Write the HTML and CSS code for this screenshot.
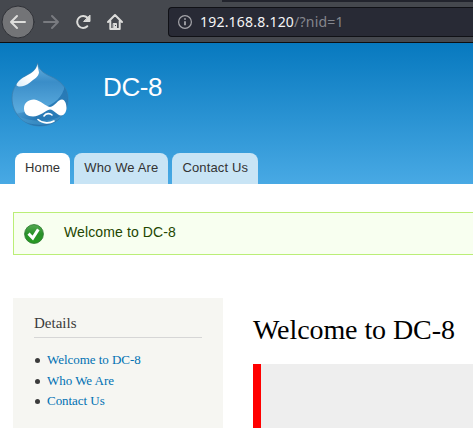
FILE: index.html
```html
<!DOCTYPE html>
<html lang="en">
<head>
<meta charset="utf-8">
<title>Welcome to DC-8</title>
<link rel="stylesheet" href="styles.css">
</head>
<body>
<div class="toolbar">
  <svg class="nav-icons" width="168" height="42" viewBox="0 0 168 42" fill="none" stroke-width="2" stroke-linecap="round" stroke-linejoin="round">
    <circle cx="18" cy="22" r="16" fill="#737477" stroke="#2f3137" stroke-width="1"/>
    <path d="M25 22H11M17 16l-6 6 6 6" stroke="#dededc"/>
    <path d="M44 22h14M52 16l6 6-6 6" stroke="#797b80"/>
    <path d="M87.3 26.3A6 6 0 1 1 87.5 17.8" stroke="#dcdcda"/>
    <path d="M90 15.5v6h-6z" fill="#dcdcda" stroke="#dcdcda" stroke-width="1"/>
    <path d="M108 22l7-7 7 7M110.3 21v8h9.4v-8" stroke="#dcdcda"/>
    <path d="M113.5 23.5h3v5h-3z" fill="#dcdcda" stroke="#dcdcda" stroke-width="1"/>
    <path d="M115 25h1v1h-1z" fill="#45484e"/>
  </svg>
  <div class="address">
    <svg width="16" height="16" viewBox="0 0 16 16" fill="none">
      <circle cx="8" cy="8" r="6.4" stroke="#a5a5aa" stroke-width="1.2"/>
      <path d="M8 7.3v4M8 4.3v1.5" stroke="#b5b5b9" stroke-width="1.6"/>
    </svg>
    <span class="url"><span class="host">192.168.8.120</span>/?nid=1</span>
  </div>
  <div class="tab-edge"></div>
</div>
<header class="header">
  <div class="branding">
    <svg class="logo" width="58" height="65" viewBox="0 0 58 65">
      <defs>
        <linearGradient id="drop" x1="0" y1="0" x2="0" y2="1">
          <stop offset="0" stop-color="#65b1df"/><stop offset=".3" stop-color="#3a8dc8"/><stop offset=".75" stop-color="#5aaadd"/><stop offset="1" stop-color="#3c92cd"/>
        </linearGradient>
        <linearGradient id="shine" x1="1" y1="0" x2="0" y2="1">
          <stop offset=".5" stop-color="#fff"/><stop offset="1" stop-color="#d9ecf8"/>
        </linearGradient>
        <linearGradient id="shade" x1="1" y1="0" x2="0" y2="0">
          <stop offset="0" stop-color="#1c6fac"/><stop offset=".6" stop-color="#1a6aa8"/><stop offset="1" stop-color="#1a6aa8" stop-opacity=".2"/>
        </linearGradient>
        <clipPath id="dropClip"><path d="M26.5 1C28 9 34 12 43 16C52 21 57 28 57 37C57 53 44 64 29 64C13 64 1 52 1 36C1 26 7 18 16 13C22 10 26 7 26.5 1Z"/></clipPath>
      </defs>
      <path d="M26.5 1C28 9 34 12 43 16C52 21 57 28 57 37C57 53 44 64 29 64C13 64 1 52 1 36C1 26 7 18 16 13C22 10 26 7 26.5 1Z" fill="url(#drop)" stroke="#3b7fae" stroke-width=".8"/>
      <g clip-path="url(#dropClip)">
        <path d="M54 23C52 35 43 43 31 46C22 49 12 50 3 52V65H58V23Z" fill="url(#shade)" opacity=".72"/>
        <path d="M3 52C14 66 43 67 54 51C43 61 18 61 3 52Z" fill="#4b9fd2" opacity=".5"/>
      </g>
      <path d="M26.5 2C25.5 8 21 11 16 13.5C10 16.5 6 20 5.5 23C6 25.5 14 25 19 20.5C23 17 27.5 15 28 10.500C27.500 7.500 26.500 5 26.500 2Z" fill="url(#shine)"/>
      <path d="M23 37.500C30 38.500 34 44 39 45C44 44 47 37.500 51 37.500C54 37.500 55.500 42 55.500 46C55.500 50 53 53.500 50 53.500C46 53.500 43 47.500 39 47.500C34 48.500 29 54.500 22 54.500C16 54.500 13 51.500 13 46.500C13 41 17 37.500 23 37.500Z" fill="#fff"/>
      <path d="M33 54C35 51 39 51 41 53M27 57.5C32 62 39 61.5 43 59" fill="none" stroke="#fff" stroke-width="1.6" stroke-linecap="round"/>
    </svg>
    <div class="site-name">DC-8</div>
  </div>
  <nav class="menu">
    <a class="tab active">Home</a>
    <a class="tab">Who We Are</a>
    <a class="tab">Contact Us</a>
  </nav>
</header>
<div class="message">
  <svg width="20" height="20" viewBox="0 0 20 20">
    <defs><linearGradient id="ok" x1="0" y1="0" x2="0" y2="1"><stop offset="0" stop-color="#55a952"/><stop offset=".5" stop-color="#289128"/><stop offset="1" stop-color="#289b22"/></linearGradient></defs>
    <circle cx="10" cy="10" r="9.4" fill="url(#ok)" stroke="#317e34" stroke-width=".9"/>
    <path d="M4.5 9.6l4.3 4.4 5.5-8.6" fill="none" stroke="#fff" stroke-width="3"/>
  </svg>
  <span>Welcome to DC-8</span>
</div>
<div class="columns">
  <aside class="sidebar">
    <h2>Details</h2>
    <ul>
      <li><a>Welcome to DC-8</a></li>
      <li><a>Who We Are</a></li>
      <li><a>Contact Us</a></li>
    </ul>
  </aside>
  <main class="content">
    <h1>Welcome to DC-8</h1>
    <div class="quote"></div>
  </main>
</div>
</body>
</html>
```
FILE: styles.css
```css
* { box-sizing: border-box; }
body {
  margin: 0;
  width: 473px;
  height: 428px;
  overflow: hidden;
  background: #fff;
  font-family: "Liberation Serif", serif;
}
svg { display: block; flex: none; }
.toolbar {
  position: relative;
  display: flex;
  height: 43px;
  background: #45484e;
  border-bottom: 1px solid #0d0e10;
}
.address {
  display: flex;
  align-items: center;
  flex: 1;
  height: 30px;
  margin-top: 7px;
  padding-left: 8px;
  background: #282a35;
  border: 1px solid #101116;
  border-right: 0;
  border-radius: 4px 0 0 4px;
}
.url {
  margin-left: 7px;
  font: 14px/28px "Noto Sans", sans-serif;
  letter-spacing: 0.21px;
  color: #85868d;
  white-space: nowrap;
}
.host { color: #f5f5f5; }
.tab-edge {
  position: absolute;
  left: 222px;
  right: 0;
  top: 0;
  height: 2px;
  background: #22242d;
}
.header {
  display: flex;
  flex-direction: column;
  justify-content: space-between;
  height: 141px;
  background: linear-gradient(#0779bf, #48a9e4);
}
.branding { display: flex; padding: 19px 0 0 11px; }
.site-name {
  margin: 10px 0 0 34px;
  font: 26px/30px "Liberation Sans", sans-serif;
  letter-spacing: -0.4px;
  color: #fffeff;
}
.menu { display: flex; gap: 4px; padding-left: 15px; }
.tab {
  height: 31px;
  padding: 0 10px;
  border-radius: 8px 8px 0 0;
  background: #c8e4f5;
  color: #333;
  font: 13px/29px "Liberation Sans", sans-serif;
  letter-spacing: 0.14px;
  white-space: nowrap;
}
.tab.active { background: #fff; }
.message {
  display: flex;
  align-items: center;
  height: 43px;
  margin: 28px 0 0 13px;
  padding-left: 10px;
  border: 1px solid #be7;
  border-right: 0;
  background: #f8fff0;
  color: #234600;
  font: 14px/20px "Liberation Sans", sans-serif;
  letter-spacing: 0.12px;
}
.message span { margin: -3px 0 0 20px; }
.columns { display: flex; margin: 43px 0 0 13px; height: 130px; }
.sidebar {
  width: 210px;
  padding: 15px 21px 0;
  background: #f6f6f2;
}
.sidebar h2 {
  margin: 0;
  height: 25px;
  border-bottom: 1px solid #d6d6d6;
  color: #3b3b3b;
  font: 15px/20px "Liberation Serif", serif;
}
.sidebar ul { margin: 12px 0 0; padding: 0; color: #3b3b3b; list-style: none; }
.sidebar li {
  display: flex;
  align-items: center;
  gap: 7px;
  padding-left: 1px;
  font-size: 13px;
  line-height: 20.6px;
  letter-spacing: -0.04px;
}
.sidebar li::before {
  content: "";
  width: 5px;
  height: 5px;
  margin-top: 1px;
  border-radius: 50%;
  background: #3b3b3b;
}
.sidebar a { color: #0071b3; }
.content { flex: 1; padding: 15px 0 0 30px; }
.content h1 { margin: 0; font: 28px/34px "Liberation Serif", serif; letter-spacing: -0.08px; color: #000; }
.quote { height: 64px; margin-top: 17px; background: #eee; border-left: 8px solid #f00; }
```
